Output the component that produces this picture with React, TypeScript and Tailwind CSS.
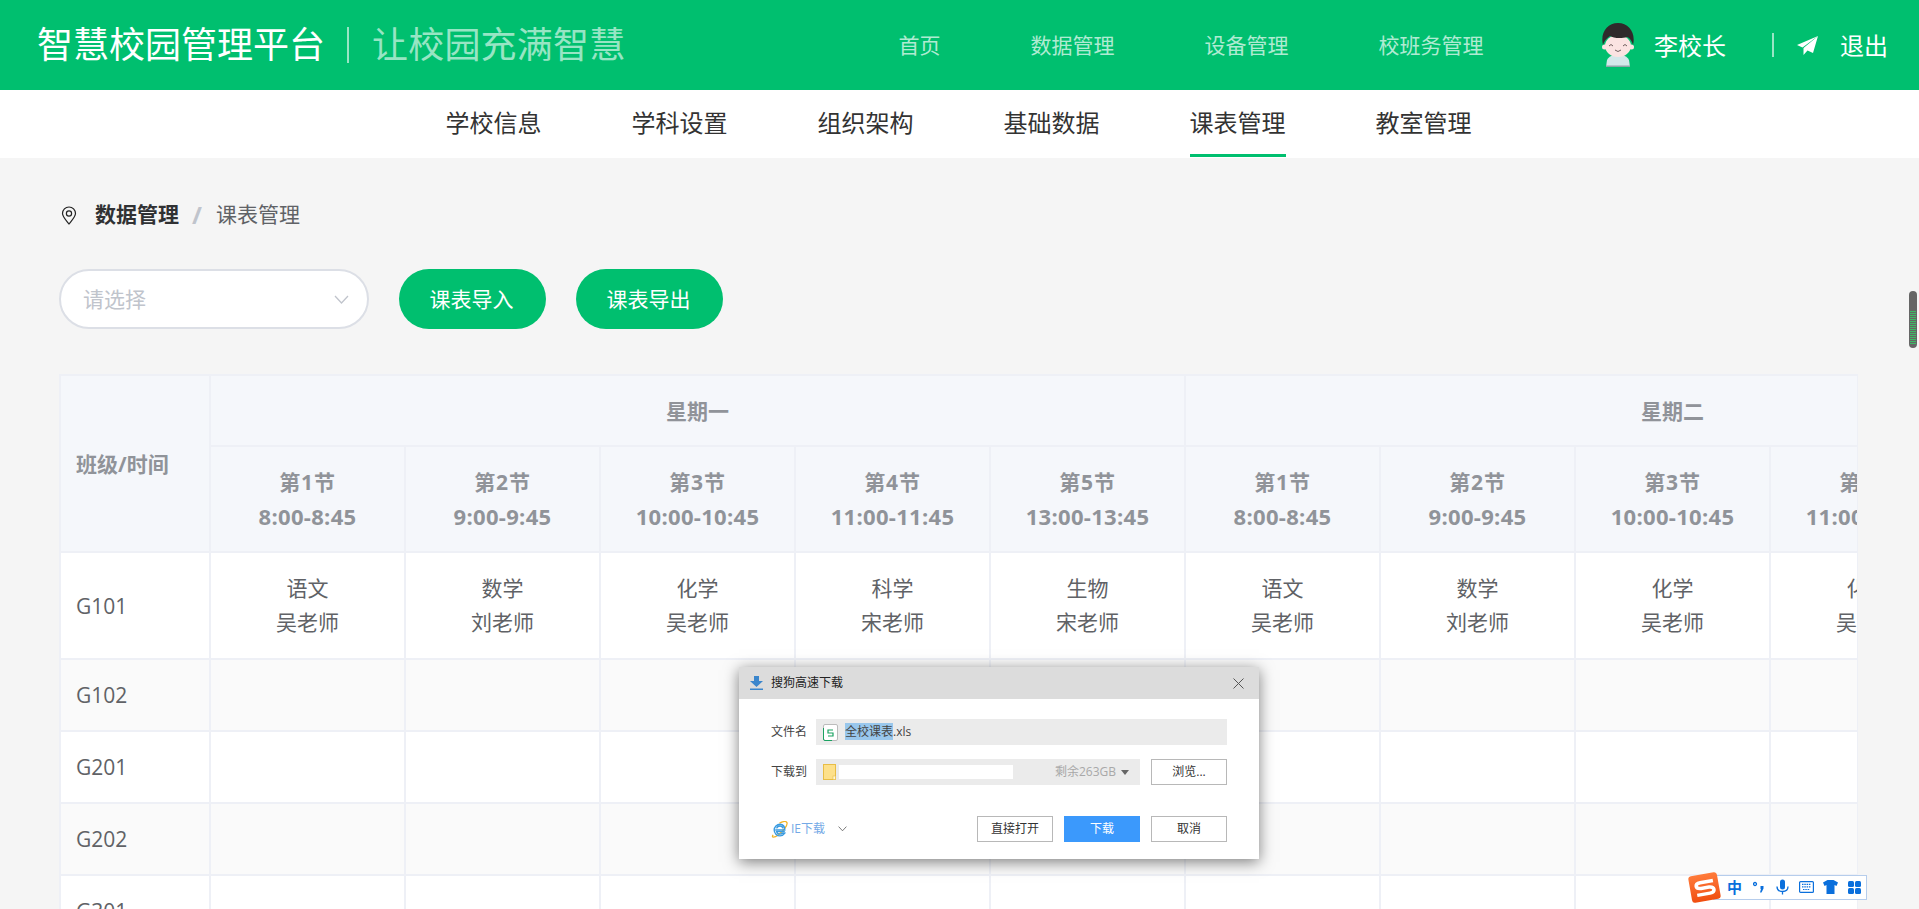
const FONT = "font-['Open_Sans','Noto_Sans_CJK_SC',sans-serif]";

const TOP_NAV = ["首页", "数据管理", "设备管理", "校班务管理"];
const SUB_NAV = ["学校信息", "学科设置", "组织架构", "基础数据", "课表管理", "教室管理"];
const PERIODS = [
  ["第1节", "8:00-8:45"],
  ["第2节", "9:00-9:45"],
  ["第3节", "10:00-10:45"],
  ["第4节", "11:00-11:45"],
  ["第5节", "13:00-13:45"],
];
const MON = [
  ["语文", "吴老师"],
  ["数学", "刘老师"],
  ["化学", "吴老师"],
  ["科学", "宋老师"],
  ["生物", "宋老师"],
];
const TUE = [
  ["语文", "吴老师"],
  ["数学", "刘老师"],
  ["化学", "吴老师"],
  ["化学", "吴老师"],
  ["生物", "宋老师"],
];
const EMPTY_ROWS = ["G102", "G201", "G202", "G301"];
const BORDER = "border-2 border-[#eef0f6]";

function Avatar() {
  return (
    <svg width="34" height="44" viewBox="0 0 34 44" className="shrink-0">
      <path d="M5 44 L6 37 Q8 33 13 32 L21 32 Q26 33 28 37 L29 44 Z" fill="#d3e8ea" />
      <rect x="5" y="42.500" width="24" height="1.500" fill="#8fa5a8" />
      <ellipse cx="17" cy="23" rx="13" ry="11" fill="#fbe3e2" />
      <circle cx="3.500" cy="24" r="2.500" fill="#fbe3e2" />
      <circle cx="30.500" cy="24" r="2.500" fill="#fbe3e2" />
      <path d="M2 22 C-1 10 6 0 17 0 C28 0 35 10 32 22 C31 18 29 15 26 14 C20 16 12 15 9 13 C6 15 3 18 2 22 Z" fill="#2f2a2b" />
      <path d="M8 23 q2 -3 4 0 M22 23 q2 -3 4 0 M14 27 q3 3 6 0" fill="none" stroke="#4a3a3a" strokeWidth="0.800" />
    </svg>
  );
}

function Plane() {
  return (
    <svg width="21" height="19" viewBox="0 0 21 19" className="shrink-0">
      <path d="M21 0 L0 9 L5.500 11.500 Z" fill="#fff" />
      <path d="M21 0 L6.500 12 L6.500 19 L10.500 14.500 L16 17 Z" fill="#fff" />
    </svg>
  );
}

function Pin() {
  return (
    <svg width="16" height="19" viewBox="0 0 16 19" className="shrink-0" fill="none" stroke="#222" strokeWidth="1.200">
      <path d="M8 18 C4 13 1.500 10.500 1.500 7.500 A6.500 6.500 0 0 1 14.500 7.500 C14.500 10.500 12 13 8 18 Z" />
      <circle cx="8" cy="7.500" r="2.600" />
    </svg>
  );
}

function Chevron({ size, color }: { size: number; color: string }) {
  return (
    <svg width={size} height={size * 0.6} viewBox="0 0 15 9" fill="none" stroke={color} strokeWidth="1.300">
      <path d="M1 1 L7.500 8 L14 1" />
    </svg>
  );
}

function Header() {
  return (
    <header className="flex h-[90px] shrink-0 items-center bg-[#00bf6f] pl-[37px] pr-[31px]">
      <span className="text-[36px] leading-none text-white">智慧校园管理平台</span>
      <span className="ml-[22px] h-[36px] w-[2px] bg-white/60" />
      <span className="ml-[23px] text-[36px] leading-none tracking-[0.2px] text-white/60">让校园充满智慧</span>
      <nav className="ml-[273px] flex items-center gap-[90px] pt-[1px] text-[21px] text-white/70">
        {TOP_NAV.map((n) => (
          <span key={n}>{n}</span>
        ))}
      </nav>
      <div className="ml-auto flex items-center">
        <Avatar />
        <span className="ml-[19px] pt-[2px] text-[24px] text-white">李校长</span>
        <span className="ml-[46px] h-[24px] w-[2px] bg-white/60" />
        <span className="ml-[23px]">
          <Plane />
        </span>
        <span className="ml-[22px] pt-[2px] text-[24px] text-white">退出</span>
      </div>
    </header>
  );
}

function SubNav() {
  return (
    <nav className="flex h-[68px] shrink-0 justify-center gap-[90px] bg-white pb-[1px] pr-[2px] text-[24px] text-[#333]">
      {SUB_NAV.map((n) => (
        <span key={n} className={"flex items-center border-b-[3px] pt-[2px] " + (n === "课表管理" ? "border-[#00bf6f]" : "border-transparent")}>
          {n}
        </span>
      ))}
    </nav>
  );
}

function Timetable() {
  const th = BORDER + " bg-[#f5f7fb] font-bold text-[#909399]";
  return (
    <div className="mt-[45px] min-h-0 flex-1 overflow-hidden border-r border-[#eef0f6]">
      <table className="w-[2100px] table-fixed border-collapse text-[21px] leading-[34px]">
        <colgroup>
          <col className="w-[150px]" />
          {Array.from({ length: 10 }).map((_, i) => (
            <col key={i} className="w-[195px]" />
          ))}
        </colgroup>
        <thead>
          <tr className="h-[71px]">
            <th rowSpan={2} className={th + " pl-[15px] text-left"}>班级/时间</th>
            <th colSpan={5} className={th}>星期一</th>
            <th colSpan={5} className={th}>星期二</th>
          </tr>
          <tr className="h-[106px]">
            {[...PERIODS, ...PERIODS].map((p, i) => (
              <th key={i} className={th}>
                <span className="tracking-[0.8px]">{p[0]}</span>
                <br />
                <span className="text-[22px] tracking-[0.3px]">{p[1]}</span>
              </th>
            ))}
          </tr>
        </thead>
        <tbody className="text-[#606266]">
          <tr className="h-[107px] bg-white">
            <td className={BORDER + " pl-[15px]"}>G101</td>
            {[...MON, ...TUE].map((c, i) => (
              <td key={i} className={BORDER + " pb-[2px] text-center"}>
                {c[0]}
                <br />
                {c[1]}
              </td>
            ))}
          </tr>
          {EMPTY_ROWS.map((r, ri) => (
            <tr key={r} className={"h-[72px] " + (ri % 2 === 0 ? "bg-[#fafafa]" : "bg-white")}>
              <td className={BORDER + " pl-[15px]"}>{r}</td>
              {Array.from({ length: 10 }).map((_, i) => (
                <td key={i} className={BORDER} />
              ))}
            </tr>
          ))}
        </tbody>
      </table>
    </div>
  );
}

function DlgButton({ label, className }: { label: string; className: string }) {
  return (
    <button className={"flex h-[26px] w-[76px] items-center justify-center border text-[12px] " + className}>
      {label}
    </button>
  );
}

const DLG_PLAIN = "border-[#b8b8b8] bg-white text-[#333]";

function DownloadDialog() {
  return (
    <div className="absolute left-[739px] top-[667px] flex h-[192px] w-[520px] flex-col bg-white text-[12px] text-[#444] shadow-[0_3px_14px_rgba(0,0,0,0.5)]">
      <div className="flex h-[32px] shrink-0 items-center bg-[#dcdcdc] pl-[11px] pr-[15px]">
        <svg width="13" height="14" viewBox="0 0 13 14" className="shrink-0">
          <path d="M4 0 H9 V5 H13 L6.500 11 L0 5 H4 Z" fill="#3b86cc" />
          <rect x="0" y="12.500" width="13" height="1.500" fill="#3b86cc" />
        </svg>
        <span className="ml-[8px] text-[#222]">搜狗高速下载</span>
        <svg width="11" height="11" viewBox="0 0 11 11" className="ml-auto" stroke="#555" strokeWidth="1">
          <path d="M0.500 0.500 L10.500 10.500 M10.500 0.500 L0.500 10.500" />
        </svg>
      </div>
      <div className="flex flex-1 flex-col px-[32px] pb-[17px] pt-[20px]">
        <div className="flex h-[26px] items-center">
          <span className="w-[45px] shrink-0">文件名</span>
          <div className="flex h-full flex-1 items-center bg-[#ebebeb] pl-[7px]">
            <svg width="15" height="17" viewBox="0 0 15 17" className="shrink-0" fill="none">
              <path d="M2 0.500 H13 Q14.500 0.500 14.500 2 V15 Q14.500 16.500 13 16.500 H2 Q0.500 16.500 0.500 15 V2 Q0.500 0.500 2 0.500 Z" fill="#fff" stroke="#bbb" />
              <path d="M0.500 4 V15 Q0.500 16.500 2 16.500 H9" stroke="#1aa261" />
              <path d="M10 6 H5 V9 H10 V12 H5" stroke="#1aa261" strokeWidth="1.200" />
            </svg>
            <span className="ml-[7px]">
              <span className="bg-[#99c7ec]">全校课表</span>.xls
            </span>
          </div>
        </div>
        <div className="mt-[14px] flex h-[26px] items-center">
          <span className="w-[45px] shrink-0">下载到</span>
          <div className="flex h-full w-[324px] items-center bg-[#ebebeb] pl-[7px] pr-[11px]">
            <svg width="13" height="16" viewBox="0 0 13 16" className="shrink-0">
              <rect x="0.500" y="0.500" width="12" height="15" fill="#fde08a" stroke="#e8bd45" />
              <rect x="10" y="12" width="2.500" height="3.500" fill="#fff7d8" stroke="#e8bd45" strokeWidth="0.600" />
            </svg>
            <span className="ml-[3px] h-[14px] w-[174px] bg-white" />
            <span className="ml-auto text-[#a8a8a8]">剩余263GB</span>
            <span className="ml-[5px] h-0 w-0 border-x-[4px] border-t-[5px] border-x-transparent border-t-[#666]" />
          </div>
          <DlgButton label="浏览..." className={"ml-[11px] " + DLG_PLAIN} />
        </div>
        <div className="mt-auto flex h-[26px] items-center">
          <svg width="17" height="17" viewBox="0 0 16 16" className="shrink-0" fill="none">
            <path d="M2 13 C0 16 3 16 7 13 C11 10 16 4 15 1.500 C14 -0.500 10 1 8 2" stroke="#f0b429" strokeWidth="1.200" />
            <path d="M4 8.500 H13 C13 5 11 3 8.500 3 C5.500 3 3 5.500 3 8.500 C3 11.500 5.500 14 8.500 14 C10.500 14 12 13 13 11.500 H10.500 C10 12 9.500 12.300 8.500 12.300 C6.500 12.300 5.500 11 5.300 10 H13 M5.300 7 C5.700 5.500 7 4.700 8.500 4.700 C10 4.700 11 5.700 11.200 7" stroke="#3a9be0" strokeWidth="1.300" />
          </svg>
          <span className="ml-[3px] text-[#74a9e6]">IE下载</span>
          <span className="ml-[13px]">
            <Chevron size={9} color="#555" />
          </span>
          <DlgButton label="直接打开" className={"ml-auto " + DLG_PLAIN} />
          <DlgButton label="下载" className="ml-[11px] border-[#3b99fc] bg-[#3b99fc] text-white" />
          <DlgButton label="取消" className={"ml-[11px] " + DLG_PLAIN} />
        </div>
      </div>
    </div>
  );
}

function ImeBar() {
  return (
    <div className="absolute left-[1690px] top-[872px] flex h-[30px] items-center">
      <div className="z-10 -mr-[6px] flex h-[27px] w-[29px] -rotate-[10deg] items-center justify-center rounded-[3px] bg-gradient-to-b from-[#ff7b3a] to-[#f04d0e]">
        <svg width="22" height="18" viewBox="0 0 22 18" fill="none" stroke="#fff" strokeWidth="3.500">
          <path d="M20 3 H7 Q2.500 3 2.500 6 Q2.500 8.500 7 8.800 H15 Q19.500 9.200 19.500 12 Q19.500 15 15 15 H2" />
        </svg>
      </div>
      <div className="flex h-[25px] w-[154px] items-center border border-[#b6cdec] bg-white pl-[13px] text-[#0a6fdc]">
        <span className="w-[26px] text-[15px] font-bold leading-none">中</span>
        <svg width="11" height="12" viewBox="0 0 11 12" fill="currentColor">
          <circle cx="2" cy="3" r="1.500" fill="none" stroke="currentColor" strokeWidth="1.300" />
          <path d="M7.500 5 H10.500 V7.500 L8.500 11.500 H7 L8 8 H7.500 Z" />
        </svg>
        <svg width="13" height="17" viewBox="0 0 13 16" className="ml-[12px]">
          <rect x="4" y="0" width="5" height="10" rx="2.500" fill="currentColor" />
          <path d="M1 7 C1 11 3.500 12 6.500 12 C9.500 12 12 11 12 7 M6.500 12 V15" fill="none" stroke="currentColor" strokeWidth="1.300" />
        </svg>
        <svg width="15" height="12" viewBox="0 0 15 12" className="ml-[10px]">
          <rect x="0.600" y="0.600" width="13.800" height="10.800" rx="1" fill="none" stroke="currentColor" strokeWidth="1.200" />
          <path d="M3 3.300 H12 M3 5.800 H12 M4 8.500 H11" stroke="currentColor" strokeWidth="1.200" strokeDasharray="1.500 0.800" />
        </svg>
        <svg width="15" height="14" viewBox="0 0 15 14" className="ml-[9px]">
          <path d="M4.500 0 H10.500 L15 2.500 L13.500 6 L11.500 5 V14 H3.500 V5 L1.500 6 L0 2.500 Z" fill="currentColor" />
        </svg>
        <svg width="13" height="13" viewBox="0 0 13 13" className="ml-[10px]" fill="currentColor">
          <rect x="0" y="0" width="6" height="6" rx="1.500" />
          <rect x="7" y="0" width="6" height="6" rx="1.500" />
          <rect x="0" y="7" width="6" height="6" rx="1.500" />
          <rect x="7" y="7" width="6" height="6" rx="1.500" />
        </svg>
      </div>
    </div>
  );
}

function Gadget() {
  return (
    <div className="absolute left-[1909px] top-[291px] flex h-[57px] w-[8px] flex-col overflow-hidden rounded-full bg-[#666]">
      <div className="mt-[20px] flex flex-col gap-[1px] px-[1px]">
        {Array.from({ length: 17 }).map((_, i) => (
          <span key={i} className="h-[1px] bg-[#3dbb66]" />
        ))}
      </div>
    </div>
  );
}

export default function App() {
  return (
    <div className={FONT + " relative flex h-[909px] w-full flex-col overflow-hidden bg-[#f5f5f5]"}>
      <Header />
      <SubNav />
      <main className="flex min-h-0 flex-1 flex-col pl-[59px] pr-[61px]">
        <div className="mt-[41px] flex h-[32px] items-center text-[21px]">
          <span className="ml-[2px]">
            <Pin />
          </span>
          <span className="ml-[18px] font-bold text-[#303133]">数据管理</span>
          <span className="ml-[13px] text-[24px] font-bold text-[#c0c4cc]">/</span>
          <span className="ml-[14px] text-[#606266]">课表管理</span>
        </div>
        <div className="mt-[38px] flex items-center">
          <div className="flex h-[60px] w-[310px] items-center justify-between rounded-full border-2 border-[#dcdfe6] bg-white pl-[22px] pr-[18px] text-[21px] text-[#c0c4cc]">
            <span className="pt-[1px]">请选择</span>
            <Chevron size={15} color="#c0c4cc" />
          </div>
          <button className="ml-[30px] h-[60px] w-[147px] rounded-full bg-[#00bf6f] pr-[2px] pt-[1px] text-[21px] text-white">课表导入</button>
          <button className="ml-[30px] h-[60px] w-[147px] rounded-full bg-[#00bf6f] pr-[2px] pt-[1px] text-[21px] text-white">课表导出</button>
        </div>
        <Timetable />
      </main>
      <DownloadDialog />
      <ImeBar />
      <Gadget />
    </div>
  );
}
